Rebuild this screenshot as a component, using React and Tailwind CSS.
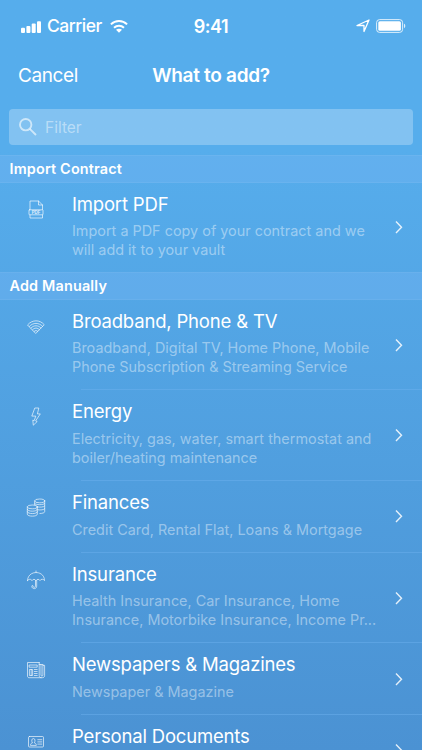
import { useState } from "react";

// ================= ICONS =================
const iconProps = {
  viewBox: "0 0 20 20",
  fill: "none",
  stroke: "currentColor",
  strokeWidth: 0.8,
  strokeLinejoin: "round",
  strokeLinecap: "round",
  className: "w-5 h-5",
};

const PdfIcon = () => (
  <svg {...iconProps}>
    <path d="M4 9.5V1h8.5l4 4v4.5M12.5 1v4h4M4 15v3h12.5V15" />
    <rect x="3" y="9.8" width="14" height="5" rx="0.6" />
    <text x="10" y="13.9" textAnchor="middle" fontSize="4.4" fontWeight="700" fill="currentColor" stroke="none">
      PDF
    </text>
  </svg>
);

const BroadbandIcon = () => (
  <svg {...iconProps}>
    <path d="M1.8 7.7C6.2 2.5 13.8 2.5 18.2 7.7L10 16.2z" />
    <path d="M3.4 9.4C7 5.3 13 5.3 16.6 9.4M5 11.1C7.8 7.9 12.2 7.9 15 11.1M6.6 12.7c1.9-2.2 4.9-2.200 6.800 0M8.200 14.400c1-1.200 2.600-1.200 3.600 0" />
  </svg>
);

const EnergyIcon = () => (
  <svg {...iconProps}>
    <path d="M9.2 1h3.6l-1.4 5.900h2.900L9.600 13.900l1.600.6-3.900 3.700-.5-5.100 1.400.6 1.600-4.600H6.200z" />
  </svg>
);

const FinancesIcon = () => (
  <svg {...iconProps}>
    <ellipse cx="13.7" cy="2.9" rx="5" ry="1.9" />
    <path d="M8.7 2.9v4.1M18.7 2.900v10.700c0 1.100-2.100 1.900-4.800 1.900M8.700 5.600c.9 1.500 9.100 1.500 10 0M11.200 8.900c2.800.5 6.700.2 7.500-.8M12 11.800c2.500.4 6 .1 6.700-1" />
    <ellipse cx="6.300" cy="8.900" rx="5" ry="1.900" />
    <path d="M1.300 8.900v7.300c0 2.600 10 2.600 10 0V8.900M1.300 11.400c0 2.500 10 2.500 10 0M1.300 13.800c0 2.500 10 2.500 10 0" />
  </svg>
);

const InsuranceIcon = () => (
  <svg {...iconProps}>
    <path d="M10 1v1.500M1.500 10.600c0-10.800 17-10.800 17 0-.8-1.800-3.800-1.800-4.500 0-.9-1.700-3-1.700-4 0-1-1.700-3.100-1.700-4 0-.7-1.800-3.700-1.800-4.500 0z" />
    <path d="M9.500 10.500v5.400c0 1.900-2.500 1.900-2.500.2 0-.8-1.200-.8-1.200 0 0 3.500 4.900 3.300 4.900 0v-5.600" />
  </svg>
);

const NewsIcon = () => (
  <svg {...iconProps}>
    <path d="M13.200 2.500H1.500V16c0 1 .6 1.700 1.600 1.700h13.300c1.300 0 2.200-.8 2.200-2V5.300h-1.700v9.800c0 1.400-1.900 1.400-1.900 0V4.500h-1.800M13.200 2.500v13.300c0 1 .8 1.900 1.900 1.900M15 4.500h2v1" />
    <path d="M3.500 5h7.700v2.200H3.500zM3.800 9.500h2.800v6H3.800zM5.200 9.500v6M8.300 9.500h2.900M8.300 11.500h2.900M8.300 13.500h2.900M8.300 15.500h2.900" />
  </svg>
);

const DocumentsIcon = () => (
  <svg {...iconProps}>
    <rect x="2.500" y="4.500" width="15" height="10.500" rx="1" />
    <path d="M4.500 13c0-1.300.8-1.900 2-2.200-1.300-1.800-.8-4.300.9-4.300s2.200 2.500.9 4.300c1.200.3 2 .9 2 2.200zM11.800 7.700h4M11.800 9.900h4M11.800 12.100h4" />
  </svg>
);

const ChevronIcon = () => (
  <svg viewBox="0 0 8 14" fill="none" stroke="currentColor" strokeWidth="1.400" className="w-2 h-3.5">
    <path d="M1 1.500L6.500 7.200 1 12.900" />
  </svg>
);

// ================= DATA =================
const sections = [
  {
    title: "Import Contract",
    items: [
      {
        name: "Import PDF",
        lines: ["Import a PDF copy of your contract and we", "will add it to your vault"],
        icon: PdfIcon,
      },
    ],
  },
  {
    title: "Add Manually",
    items: [
      {
        name: "Broadband, Phone & TV",
        lines: ["Broadband, Digital TV, Home Phone, Mobile", "Phone Subscription & Streaming Service"],
        icon: BroadbandIcon,
      },
      {
        name: "Energy",
        lines: ["Electricity, gas, water, smart thermostat and", "boiler/heating maintenance"],
        icon: EnergyIcon,
      },
      {
        name: "Finances",
        lines: ["Credit Card, Rental Flat, Loans & Mortgage"],
        icon: FinancesIcon,
      },
      {
        name: "Insurance",
        lines: ["Health Insurance, Car Insurance, Home", "Insurance, Motorbike Insurance, Income Pr..."],
        icon: InsuranceIcon,
      },
      {
        name: "Newspapers & Magazines",
        lines: ["Newspaper & Magazine"],
        icon: NewsIcon,
      },
      {
        name: "Personal Documents",
        lines: [],
        icon: DocumentsIcon,
      },
    ],
  },
];

function StatusBar() {
  return (
    <div className="grid grid-cols-[1fr_auto_1fr] items-center h-[52px] pl-[21px] pr-[16px]">
      <div className="flex items-center">
        <svg viewBox="0 0 20 12" fill="currentColor" className="w-5 h-3 mt-px">
          <rect x="0" y="6.800" width="4" height="5.200" rx="1" />
          <rect x="5.400" y="5" width="4" height="7" rx="1" />
          <rect x="10.700" y="2.600" width="4" height="9.400" rx="1" />
          <rect x="16" y="0.300" width="4" height="11.700" rx="1" />
        </svg>
        <span className="ml-[6px] text-[17.5px] font-medium tracking-[-0.5px]">Carrier</span>
        <svg viewBox="0 0 18 13" fill="none" stroke="currentColor" strokeWidth="2" className="w-[18px] h-[13px] ml-2">
          <path d="M0.900 4.400c4.600-4.400 11.600-4.400 16.200 0M4 7.700c2.900-2.700 7.100-2.700 10 0" />
          <path d="M9 12.700L6 9.800c1.700-1.500 4.300-1.500 6 0z" fill="currentColor" stroke="none" />
        </svg>
      </div>
      <span className="pr-[5px] text-center text-[18px] font-semibold tracking-[-0.5px]">9:41</span>
      <div className="flex items-center justify-end">
        <svg viewBox="0 0 14 14" fill="none" stroke="currentColor" strokeWidth="1.300" strokeLinejoin="round" className="w-3.5 h-3.5">
          <path d="M13 1L8 12.500V6.500H1z" />
        </svg>
        <svg viewBox="0 0 30 14" className="w-[30px] h-3.5 ml-[6px]">
          <rect x="0.600" y="0.600" width="26" height="12.800" rx="3" fill="none" stroke="currentColor" strokeWidth="1" opacity="0.800" />
          <rect x="2.300" y="2.300" width="22.600" height="9.400" rx="1.500" fill="currentColor" />
          <path d="M28 4.800c1.700.5 1.700 3.900 0 4.400z" fill="currentColor" opacity="0.800" />
        </svg>
      </div>
    </div>
  );
}

export default function App() {
  const [search, setSearch] = useState("");

  return (
    <div className="h-[750px] overflow-hidden bg-linear-to-b from-[#56adec] from-20% to-[#4b92d3] text-white font-['Inter','Liberation_Sans',sans-serif]">
      <StatusBar />

      {/* HEADER */}
      <div className="grid grid-cols-[1fr_auto_1fr] items-center h-[46px] px-[18px]">
        <button className="justify-self-start pt-px text-[19px] leading-6 tracking-[-0.4px]">Cancel</button>
        <h1 className="pt-px text-[19px] leading-6 font-semibold tracking-[-0.3px]">What to add?</h1>
        <span />
      </div>

      {/* FILTER */}
      <div className="flex items-center h-[36px] mt-[11px] mx-[9px] pl-[10px] rounded bg-white/26">
        <svg viewBox="0 0 18 18" fill="none" stroke="currentColor" strokeWidth="1.900" className="w-[18px] h-[18px] text-white/60">
          <circle cx="6.700" cy="6.700" r="5.700" />
          <path d="M10.800 10.800L17 17" />
        </svg>
        <input
          type="text"
          placeholder="Filter"
          className="flex-1 ml-2 pt-px text-[15.5px] outline-none placeholder:text-white/45"
          value={search}
          onChange={(e) => setSearch(e.target.value)}
        />
      </div>

      <div className="mt-[10px]">
        {sections.map((section) => (
          <div key={section.title}>
            <h2 className="h-[27.5px] pl-[9.5px] border-y border-white/5 bg-[#72b4f2]/45 text-[14.4px] leading-[25.6px] font-semibold tracking-[0.18px]">
              {section.title}
            </h2>
            {section.items.map((item, index) => (
              <div key={item.name}>
                {index > 0 && <div className="h-px ml-[81px] bg-[#6bb0ee]/50" />}
                <div className={`flex ${item.lines.length > 1 ? "h-[89.7px]" : "h-[70.6px]"}`}>
                  <div className="w-[72px] pl-[26px] pt-[17px] text-white/80">
                    <item.icon />
                  </div>
                  <div className="flex-1 pt-[9px] whitespace-nowrap">
                    <p className="text-[18.5px] leading-6 tracking-[-0.18px]">{item.name}</p>
                    <div className="pt-[5.5px] text-[14.4px] leading-[19.3px] tracking-[0.01px] text-white/43">
                      {item.lines.map((line) => (
                        <p key={line}>{line}</p>
                      ))}
                    </div>
                  </div>
                  <div className="flex items-center pr-[19px] text-white/85">
                    <ChevronIcon />
                  </div>
                </div>
              </div>
            ))}
          </div>
        ))}
      </div>
    </div>
  );
}
